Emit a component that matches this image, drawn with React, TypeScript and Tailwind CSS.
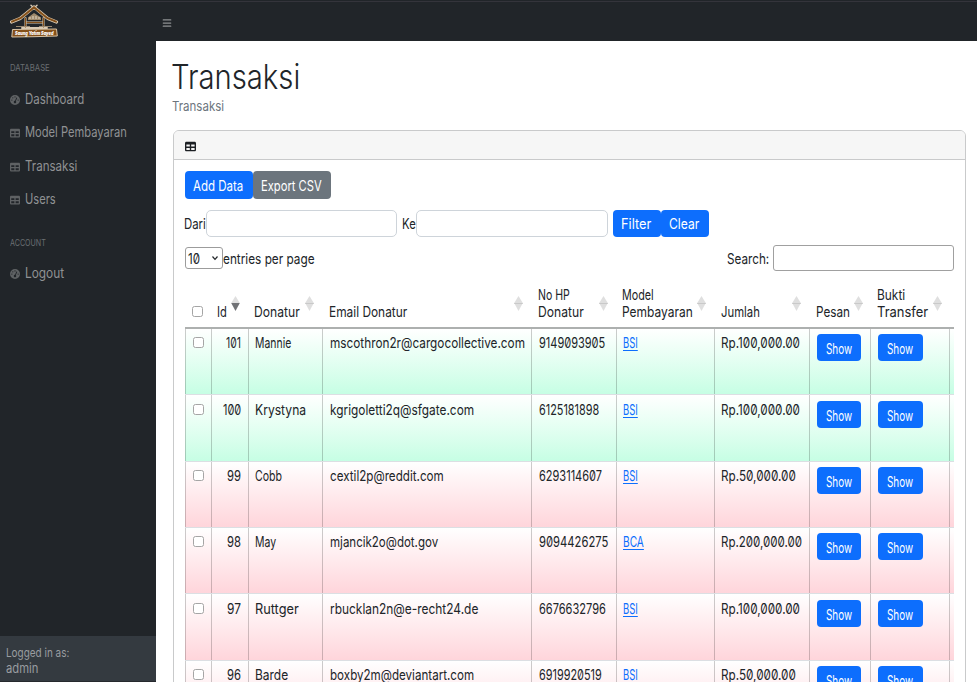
import { useLayoutEffect, useRef, useState } from "react";
import { FaBars, FaTable, FaGaugeHigh } from "react-icons/fa6";

/** Condensed label: squeezes its text horizontally to the given width. */
function Label({ text, w, className = "", inner = "" }: { text: string; w: number; className?: string; inner?: string }) {
  const ref = useRef<HTMLSpanElement>(null);
  const [scale, setScale] = useState(1);
  useLayoutEffect(() => {
    if (ref.current) setScale(w / ref.current.offsetWidth);
  }, [text, w]);
  return (
    <span className={"block shrink-0 whitespace-nowrap " + className} style={{ width: w }}>
      <span ref={ref} className={"inline-block origin-left " + inner} style={{ transform: `scaleX(${scale})` }}>
        {text}
      </span>
    </span>
  );
}

function NavItem({ text, w, gauge, className }: { text: string; w: number; gauge?: boolean; className: string }) {
  return (
    <a className={"flex items-center gap-[4.5px] pl-2.5 text-[#909294] " + className}>
      {gauge ? (
        <FaGaugeHigh className="mt-0.5 size-2.5 text-[#5f6264]" />
      ) : (
        <FaTable className="mt-0.5 size-2.5 text-[#5f6264]" />
      )}
      <Label text={text} w={w} className="text-[14px] leading-5" />
    </a>
  );
}

function Sorter({ active }: { active?: boolean }) {
  return (
    <svg className="mb-[16px] h-[16px] w-[9px] shrink-0" viewBox="0 0 9 16">
      <path d="M4.5 0 L8.8 7 H0.2 Z" fill="#dfdfdf" />
      <path d="M0.2 7 H8.8 L4.5 15 Z" fill={active ? "#707275" : "#dfdfdf"} />
      {!active && <path d="M0.2 7.5 H8.8" stroke="#c9c9c9" strokeWidth="1" />}
    </svg>
  );
}

const columns = "grid grid-cols-[27px_37px_74px_209px_85px_98px_95px_61px_79px_4px]";

const heads: { lines: [string, number][]; box: string; active?: boolean }[] = [
  { lines: [["Id", 10]], box: "pl-[5px] pr-[9px]", active: true },
  { lines: [["Donatur", 46]], box: "pl-[5px] pr-[9px]" },
  { lines: [["Email Donatur", 78]], box: "pl-[5.5px] pr-[9px]" },
  { lines: [["No HP", 32], ["Donatur", 46]], box: "pl-[6px] pr-[9px]" },
  { lines: [["Model", 32], ["Pembayaran", 71]], box: "pl-[5px] pr-[9px]" },
  { lines: [["Jumlah", 39]], box: "pl-[6px] pr-[9px]" },
  { lines: [["Pesan", 34]], box: "pl-[6px] pr-[8px]" },
  { lines: [["Bukti", 28], ["Transfer", 51]], box: "pl-[6px] pr-[8px]" },
];

type Cell = [string, number];
const rows: { id: Cell; name: Cell; mail: Cell; hp: Cell; bank: Cell; sum: Cell; ok?: boolean; low?: boolean; h: string }[] = [
  { id: ["101", 15], name: ["Mannie", 36], mail: ["mscothron2r@cargocollective.com", 195], hp: ["9149093905", 66], bank: ["BSI", 15], sum: ["Rp.100,000.00", 79], ok: true, h: "h-[66px]" },
  { id: ["100", 18], name: ["Krystyna", 51], mail: ["kgrigoletti2q@sfgate.com", 144], hp: ["6125181898", 60], bank: ["BSI", 15], sum: ["Rp.100,000.00", 79], ok: true, low: true, h: "h-[67px]" },
  { id: ["99", 14], name: ["Cobb", 27], mail: ["cextil2p@reddit.com", 114], hp: ["6293114607", 63], bank: ["BSI", 15], sum: ["Rp.50,000.00", 75], h: "h-[66px]" },
  { id: ["98", 14], name: ["May", 21], mail: ["mjancik2o@dot.gov", 108], hp: ["9094426275", 69], bank: ["BCA", 21], sum: ["Rp.200,000.00", 81], h: "h-[66px]" },
  { id: ["97", 14], name: ["Ruttger", 44], mail: ["rbucklan2n@e-recht24.de", 148], hp: ["6676632796", 67], bank: ["BSI", 15], sum: ["Rp.100,000.00", 79], low: true, h: "h-[67px]" },
  { id: ["96", 14], name: ["Barde", 33], mail: ["boxby2m@deviantart.com", 144], hp: ["6919920519", 63], bank: ["BSI", 15], sum: ["Rp.50,000.00", 75], h: "h-[67px]" },
];

function Check() {
  return <span className="block size-[11px] rounded-[2.5px] border border-[#a5a5a5] bg-white" />;
}

function Show({ className }: { className: string }) {
  return (
    <button className={"flex h-[27px] items-center justify-center rounded bg-[#0d6efd] pt-px pr-px text-white " + className}>
      <Label text="Show" w={26} />
    </button>
  );
}

function Logo() {
  return (
    <svg className="h-[35px] w-[49px]" viewBox="0 0 49 35">
      <g fill="none" stroke="#d9cbb6" strokeLinecap="round">
        <path d="M1.5 18 L10 14.5 L24 3 L38 14.5 L46.5 18" strokeWidth="3.2" />
        <path d="M21 1.2 L25 5 M27 1.2 L23 5" strokeWidth="1.5" />
        <path d="M15.5 14 V24 M33.5 14 V24 M16 18.5 H33 M12 24 H37" strokeWidth="2" />
      </g>
      <g fill="none" stroke="#84501a" strokeLinecap="round">
        <path d="M2 17.7 L10.5 14.2 L24 3.4 L37.5 14.2 L46 17.7" strokeWidth="2" />
        <path d="M15.5 14 V23 M33.5 14 V23 M17 18.5 H32" strokeWidth="1.1" />
      </g>
      <path d="M18 13.5 L24 9 L31 13.5 V16 H18Z" fill="#a08a6c" />
      <path d="M20 15 V13 M23 15 V12 M26 15 V12 M29 15 V13" stroke="#e3d8c8" strokeWidth="1" />
      <path d="M6 22.5 H20 M29 22.5 H42" stroke="#9b8a72" strokeWidth="1" />
      <path d="M2.5 25.5 L46.5 25 L47.3 32 L24 32.7 L1.8 33 Z" fill="#84501a" stroke="#d8c4a6" strokeWidth="1" strokeLinejoin="round" />
      <text x="5" y="31" fontSize="5" fontWeight="900" fontStyle="italic" fill="#fff" textLength="38.5" lengthAdjust="spacingAndGlyphs">
        Saung Yatim Sayed
      </text>
    </svg>
  );
}

export default function App() {
  return (
    <div className="flex h-[682px] w-[977px] flex-col overflow-hidden bg-white font-['Inter','Liberation_Sans',sans-serif] text-[14.5px] leading-[17px] text-[#212529] slashed-zero">
      <header className="flex h-[41px] shrink-0 border-t border-[#212529] bg-[#212529]">
        <div className="flex w-full border-t border-[#34343b]">
          <div className="w-[156px] pt-[2px] pl-2.5">
            <Logo />
          </div>
          <FaBars className="mt-4 ml-[6px] size-2.5 text-[#8f9193]" />
        </div>
      </header>
      <div className="flex min-h-0 flex-1">
        <aside className="flex w-[156px] shrink-0 flex-col bg-[#212529]">
          <nav className="flex-1">
            <Label text="DATABASE" w={40} className="mt-[18px] ml-[9.5px] text-[9.5px] text-[#6a6e71]" />
            <NavItem text="Dashboard" w={59} gauge className="mt-[13px]" />
            <NavItem text="Model Pembayaran" w={102} className="mt-[13px]" />
            <NavItem text="Transaksi" w={52} className="mt-[14px]" />
            <NavItem text="Users" w={31} className="mt-[13px]" />
            <Label text="ACCOUNT" w={36} className="mt-[25px] ml-[9.5px] text-[9.5px] text-[#6a6e71]" />
            <NavItem text="Logout" w={39} gauge className="mt-[12px]" />
          </nav>
          <footer className="h-[46px] border-b border-[#26292d] bg-[#343a40] pt-[9px] pl-1.5 text-[#9a9da0]">
            <Label text="Logged in as:" w={63} className="text-[12px] leading-4" />
            <Label text="admin" w={32} className="-mt-px text-[13px] leading-4" />
          </footer>
        </aside>
        <main className="flex-1 pt-[15px] pl-[17px]">
          <h1>
            <Label text="Transaksi" w={129} className="-ml-[2px] text-[34px] leading-[42px] font-light" />
          </h1>
          <Label text="Transaksi" w={52} className="-ml-px text-[13.5px] text-[#6c757d]" />
          <section className="mt-[15px] h-[640px] w-[793px] rounded-t-[6px] border border-[#c9cacb]">
            <div className="flex h-[29px] items-center rounded-t-[5px] border-b border-[#c9cacb] bg-[#f6f6f6] pt-[3px] pl-[11px]">
              <FaTable className="size-[11px] text-[#1c1f23]" />
            </div>
            <div className="pt-[11px] pl-[11px]">
              <div className="flex">
                <button className="flex h-7 w-[68px] items-center justify-center rounded bg-[#0d6efd] pt-px pr-[2px] text-white">
                  <Label text="Add Data" w={50} />
                </button>
                <button className="flex h-7 w-[78px] items-center justify-center rounded bg-[#6c757d] pt-px pr-[2px] text-white">
                  <Label text="Export CSV" w={61} />
                </button>
              </div>
              <div className="mt-[11px] flex items-center">
                <Label text="Dari" w={22} className="-ml-px" />
                <input className="h-[27px] w-[191px] rounded-[5px] border border-[#ced4da]" />
                <Label text="Ke" w={14} className="ml-[5px]" />
                <input className="h-[27px] w-[192px] rounded-[5px] border border-[#ced4da]" />
                <button className="ml-[5px] flex h-[27px] w-[48px] items-center justify-center rounded bg-[#0d6efd] pr-[2px] text-white">
                  <Label text="Filter" w={30} />
                </button>
                <button className="flex h-[27px] w-[48px] items-center justify-center rounded bg-[#0d6efd] pr-[2px] text-white">
                  <Label text="Clear" w={30} />
                </button>
              </div>
              <div className="mt-[8px] flex h-[26px] w-[769px] items-center">
                <span className="flex h-[22px] w-[38px] items-center justify-between rounded-[3px] border border-[#9c9c9c] pr-1 pl-[2px]">
                  <Label text="10" w={12} />
                  <svg className="size-[6px]" viewBox="0 0 6 6" fill="none" stroke="#212529" strokeWidth="1.2">
                    <path d="M0.5 1.5 L3 4.3 L5.5 1.5" />
                  </svg>
                </span>
                <Label text="entries per page" w={92} />
                <Label text="Search:" w={42} className="ml-auto" />
                <input className="ml-1 h-[26px] w-[181px] rounded-[3px] border border-[#a0a0a0]" />
              </div>

              <div className="mt-[6px] w-[769px]">
                <div className={columns + " h-[52px] border-b-2 border-[#adb0af]"}>
                  <div className="flex items-end pb-[10px] pl-[7px]">
                    <Check />
                  </div>
                  {heads.map((h, i) => (
                    <div key={i} className={"flex items-end justify-between pb-[7px] " + h.box}>
                      <div>
                        {h.lines.map(([t, w]) => (
                          <Label key={t} text={t} w={w} />
                        ))}
                      </div>
                      <div className="-mb-[8px] flex w-[9px] justify-end">
                        <Sorter active={h.active} />
                      </div>
                    </div>
                  ))}
                </div>
                {rows.map((r) => {
                  const line = "border-r border-black/20 ";
                  const text = line + (r.low ? "pt-[6px] " : "pt-[5px] ");
                  const check = line + (r.low ? "pt-[9px] " : "pt-[8px] ");
                  return (
                    <div
                      key={r.id[0]}
                      className={
                        columns +
                        " border-b border-[#dcdfe3] bg-linear-to-b from-white " +
                        r.h +
                        (r.ok ? " to-[#c6fee4]" : " to-[#ffd5db]")
                      }
                    >
                      <div className={check + "border-l pl-[7px]"}>
                        <Check />
                      </div>
                      <div className={text + "flex justify-end pr-[7px]"}>
                        <Label text={r.id[0]} w={r.id[1]} />
                      </div>
                      <div className={text + "pl-[6px]"}>
                        <Label text={r.name[0]} w={r.name[1]} />
                      </div>
                      <div className={text + "pl-[6.5px]"}>
                        <Label text={r.mail[0]} w={r.mail[1]} />
                      </div>
                      <div className={text + "pl-[7px]"}>
                        <Label text={r.hp[0]} w={r.hp[1]} />
                      </div>
                      <div className={text + "pl-[6px]"}>
                        <Label text={r.bank[0]} w={r.bank[1]} inner="text-[#0d6efd] underline underline-offset-2" />
                      </div>
                      <div className={text + "pl-[6px]"}>
                        <Label text={r.sum[0]} w={r.sum[1]} />
                      </div>
                      <div className={text + "pl-[7px]"}>
                        <Show className="w-[44px]" />
                      </div>
                      <div className={text + "pl-[7px]"}>
                        <Show className="w-[45px]" />
                      </div>
                      <div />
                    </div>
                  );
                })}
              </div>
            </div>
          </section>
        </main>
      </div>
    </div>
  );
}
